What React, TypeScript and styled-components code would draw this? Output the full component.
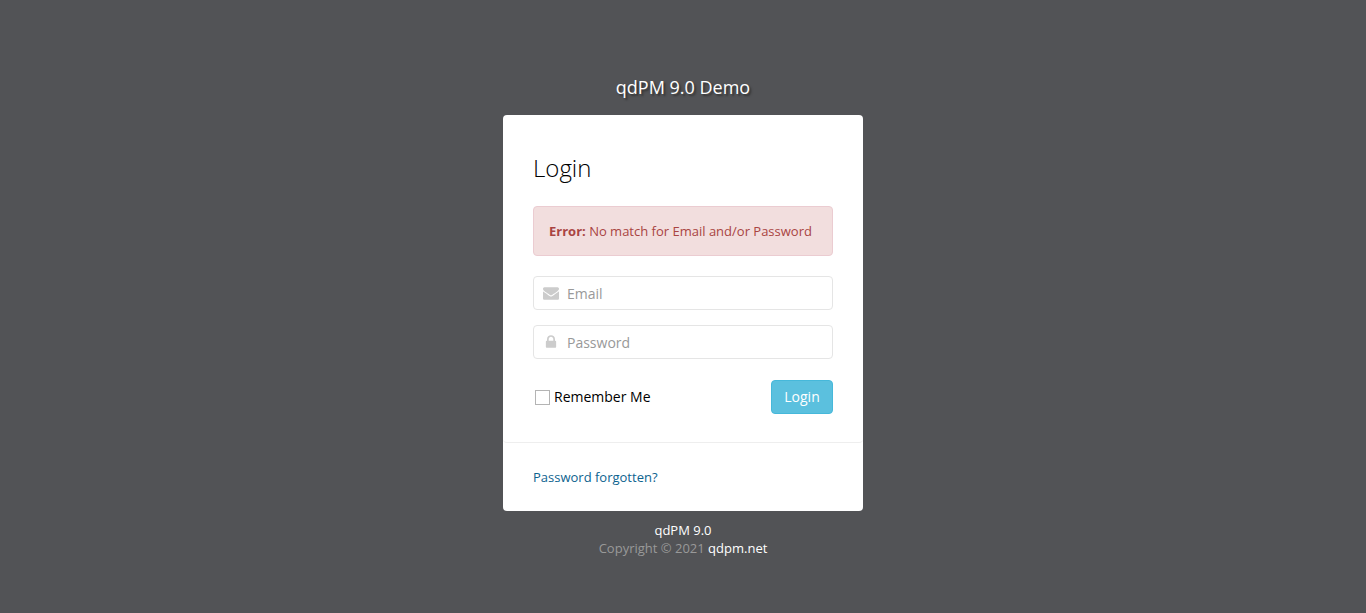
import React from "react";
import styled, { createGlobalStyle } from "styled-components";

const GlobalStyle = createGlobalStyle`
  *, *::before, *::after { box-sizing: border-box; }
  body {
    margin: 0;
    background: #525356;
    color: #000;
    font-family: "Open Sans", sans-serif;
    font-size: 13px;
    line-height: 18px;
  }
`;

const Page = styled.main`
  display: flex;
  flex-direction: column;
  align-items: center;
  min-height: 100vh;
  padding: 75px 16px 20px;
`;

const Brand = styled.div`
  margin-bottom: 16px;
  color: #fff;
  font-size: 18px;
  line-height: 24px;
  text-shadow: 2px 2px 2px #333;
`;

const Card = styled.section`
  width: 100%;
  max-width: 360px;
  background: #fff;
  border-radius: 4px;
`;

const LoginForm = styled.form`
  padding: 38px 30px 28px;
  border-bottom: 1px solid #eee;
  border-radius: 4px;
`;

const Heading = styled.h1`
  margin: 0 0 23px;
  font-size: 24px;
  font-weight: 300;
  line-height: 30px;
`;

const Alert = styled.div`
  margin-bottom: 20px;
  padding: 15px;
  border: 1px solid #ebccd1;
  border-radius: 4px;
  background: #f2dede;
  color: #a94442;
`;

const Field = styled.div`
  position: relative;
  margin-bottom: 15px;
`;

const FieldIcon = styled.svg`
  position: absolute;
  top: 9px;
  left: 10px;
  width: 16px;
  height: 16px;
  fill: #ccc;
`;

const TextInput = styled.input`
  display: block;
  width: 100%;
  height: 34px;
  padding: 6px 12px 6px 33px;
  border: 1px solid #e5e5e5;
  border-radius: 4px;
  background: #fff;
  color: #333;
  font: 14px/20px "Open Sans", sans-serif;
  &::placeholder { color: #999; opacity: 1; }
`;

const Actions = styled.div`
  display: flex;
  align-items: center;
  justify-content: space-between;
  padding-top: 6px;
`;

const RememberLabel = styled.label`
  display: flex;
  align-items: center;
  gap: 4px;
  padding-left: 2px;
  font-size: 14px;
  line-height: 20px;
`;

const Checkbox = styled.input`
  appearance: none;
  width: 15px;
  height: 15px;
  margin: 1px 0 0;
  border: 1px solid #b4b4b4;
  background: #fff;
  &:checked { background: #5bc0de; }
`;

const SubmitButton = styled.button`
  min-width: 62px;
  height: 34px;
  padding: 6px 12px;
  border: 1px solid #46b8da;
  border-radius: 4px;
  background: #5bc0de;
  color: #fff;
  font: 14px/20px "Open Sans", sans-serif;
  cursor: pointer;
`;

const CardFooter = styled.div`
  padding: 25px 30px;
`;

const ForgotLink = styled.a`
  color: #0d638f;
  text-decoration: none;
`;

const Copyright = styled.footer`
  padding-top: 10px;
  color: #999;
  text-align: center;
`;

const CopyrightLink = styled.a`
  color: #fff;
  font-weight: 500;
  text-decoration: none;
`;

const ENVELOPE =
  "M1792 710v794q0 66-47 113t-113 47h-1472q-66 0-113-47t-47-113v-794q44 49 101 87 362 246 497 345 57 42 92.5 65.5t94.5 48 110 24.5h2q51 0 110-24.5t94.5-48 92.5-65.5q170-123 498-345 57-39 100-87zm0-294q0 79-49 151t-122 123q-376 261-468 325-10 7-42.5 31t-54 38.5-52 32.5-57.5 27-50 9h-2q-23 0-50-9t-57.5-27-52-32.5-54-38.5-42.5-31q-91-64-262-182.5t-205-142.5q-62-42-117-115.5t-55-136.5q0-78 41.5-130t118.5-52h1472q65 0 112.5 47t47.5 113z";
const LOCK =
  "M640 768h512v-192q0-106-75-181t-181-75-181 75-75 181v192zm832 96v576q0 40-28 68t-68 28h-960q-40 0-68-28t-28-68v-576q0-40 28-68t68-28h32v-192q0-184 132-316t316-132 316 132 132 316v192h32q40 0 68 28t28 68z";

type IconFieldProps = { icon: string; label: string; type: string; name: string };

function IconField({ icon, label, type, name }: IconFieldProps) {
  return (
    <Field>
      <TextInput type={type} name={name} placeholder={label} aria-label={label} />
      <FieldIcon viewBox="0 0 1792 1792" aria-hidden="true">
        <path d={icon} />
      </FieldIcon>
    </Field>
  );
}

export default function App() {
  return (
    <>
      <GlobalStyle />
      <Page>
        <Brand>qdPM 9.0 Demo</Brand>
        <Card>
          <LoginForm onSubmit={(event) => event.preventDefault()}>
            <Heading>Login</Heading>
            <Alert role="alert">
              <strong>Error:</strong> No match for Email and/or Password
            </Alert>
            <IconField icon={ENVELOPE} label="Email" type="email" name="email" />
            <IconField icon={LOCK} label="Password" type="password" name="password" />
            <Actions>
              <RememberLabel htmlFor="remember">
                <Checkbox type="checkbox" id="remember" />
                Remember Me
              </RememberLabel>
              <SubmitButton type="submit">Login</SubmitButton>
            </Actions>
          </LoginForm>
          <CardFooter>
            <ForgotLink href="#forgot">Password forgotten?</ForgotLink>
          </CardFooter>
        </Card>
        <Copyright>
          <CopyrightLink href="#qdpm">qdPM 9.0</CopyrightLink>
          <br />
          Copyright © 2021 <CopyrightLink href="#qdpm-net">qdpm.net</CopyrightLink>
        </Copyright>
      </Page>
    </>
  );
}
